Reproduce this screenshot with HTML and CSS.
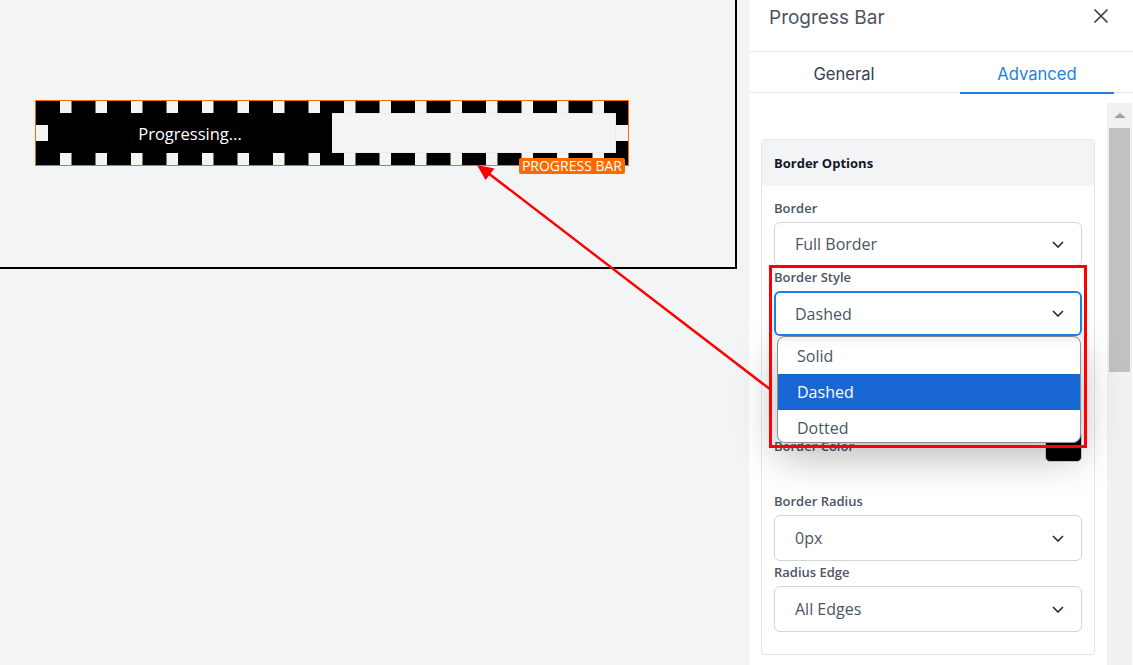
FILE: index.html
```html
<!DOCTYPE html>
<html>
<head>
<meta charset="utf-8">
<link rel="stylesheet" href="styles.css">
</head>
<body>
<div class="app">
  <div class="canvas">
    <div class="frame">
      <div class="pb">
        <div class="pb-track">
          <div class="pb-fill" style="width:284px">Progressing...</div>
        </div>
        <span class="pb-badge">PROGRESS BAR</span>
      </div>
    </div>
  </div>
  <aside class="panel">
    <div class="panel-head">
      <span class="panel-title">Progress Bar</span>
      <svg class="close" width="16" height="16" viewBox="0 0 16 16"><path d="M1.5 1.5L14.5 14.5M14.5 1.5L1.5 14.5" stroke="#374151" stroke-width="1.7" fill="none"/></svg>
    </div>
    <div class="tabs">
      <div class="tab">General</div>
      <div class="tab active">Advanced</div>
    </div>
    <div class="panel-body">
      <div class="scroll">
        <div class="card">
          <div class="card-head">Border Options</div>
          <div class="card-body">
            <div class="field">
              <div class="label">Border</div>
              <div class="select"><span>Full Border</span><svg class="chev" width="12" height="7" viewBox="0 0 12 7"><path d="M1 1l5 5 5-5" stroke="#1f2937" stroke-width="1.6" fill="none"/></svg></div>
            </div>
            <div class="field open">
              <div class="label">Border Style</div>
              <div class="select focus"><span>Dashed</span><svg class="chev" width="12" height="7" viewBox="0 0 12 7"><path d="M1 1l5 5 5-5" stroke="#1f2937" stroke-width="1.6" fill="none"/></svg></div>
              <ul class="dropdown">
                <li>Solid</li>
                <li class="sel">Dashed</li>
                <li>Dotted</li>
              </ul>
            </div>
            <div class="color-row">
              <div class="label">Border Color</div>
              <div class="swatch"></div>
            </div>
            <div class="field">
              <div class="label">Border Radius</div>
              <div class="select tall"><span>0px</span><svg class="chev" width="12" height="7" viewBox="0 0 12 7"><path d="M1 1l5 5 5-5" stroke="#1f2937" stroke-width="1.6" fill="none"/></svg></div>
            </div>
            <div class="field">
              <div class="label">Radius Edge</div>
              <div class="select tall"><span>All Edges</span><svg class="chev" width="12" height="7" viewBox="0 0 12 7"><path d="M1 1l5 5 5-5" stroke="#1f2937" stroke-width="1.6" fill="none"/></svg></div>
            </div>
          </div>
        </div>
      </div>
      <div class="scrollbar">
        <div class="sb-arrow"></div>
        <div class="sb-thumb"></div>
      </div>
    </div>
  </aside>
  <svg class="annot" width="1133" height="665" viewBox="0 0 1133 665">
    <rect x="770.5" y="266.5" width="315" height="180" fill="none" stroke="#ff0000" stroke-width="3"/>
    <line x1="771" y1="390" x2="488" y2="173" stroke="#ff0000" stroke-width="2.4"/>
    <path d="M477 165 L494.5 168.5 L485.5 180 Z" fill="#ff0000"/>
  </svg>
</div>
</body>
</html>
```

FILE: styles.css
```css
* { box-sizing: border-box; }
html, body { margin: 0; padding: 0; }
body {
  width: 1133px;
  height: 665px;
  overflow: hidden;
  background: #f3f4f6;
  font-family: "Open Sans", "Noto Sans", sans-serif;
}
.app {
  position: relative;
  display: flex;
  width: 1133px;
  height: 665px;
}
.canvas {
  width: 749px;
  flex: none;
  background: #f3f4f6;
}
.frame {
  width: 737px;
  height: 269px;
  border-right: 2px solid #000;
  border-bottom: 2px solid #000;
  padding: 101px 0 0 36px;
}
.pb {
  position: relative;
  width: 592px;
  height: 64px;
  border: 12px dashed #000;
  background: #f4f4f5;
  outline: 1px solid #ff6a00;
}
.pb-track {
  height: 40px;
  background: #f4f4f5;
  box-shadow: inset 0 0 2px rgba(0, 0, 0, 0.12);
}
.pb-fill {
  height: 40px;
  background: #000;
  color: #fff;
  font-size: 16.5px;
  display: flex;
  align-items: center;
  justify-content: center;
}
.pb-badge {
  position: absolute;
  right: -9px;
  bottom: -21px;
  height: 16px;
  padding: 0 3px;
  background: #ff6a00;
  color: #fff;
  font-size: 14px;
  line-height: 16px;
  border-radius: 2px;
}
.panel {
  width: 384px;
  flex: none;
  background: #fff;
  display: flex;
  flex-direction: column;
}
.panel-head {
  height: 52px;
  border-bottom: 1px solid #e5e7eb;
  display: flex;
  justify-content: space-between;
  align-items: flex-start;
  padding: 5px 24px 0 20px;
}
.panel-title {
  font-family: Inter, "Noto Sans", sans-serif;
  font-size: 19px;
  color: #4b5563;
  line-height: 25px;
}
.close { margin-top: 3px; }
.tabs {
  height: 41px;
  border-bottom: 1px solid #e5e7eb;
  display: flex;
  padding-left: 18px;
  gap: 39px;
}
.tab {
  width: 154px;
  text-align: center;
  font-family: Inter, "Noto Sans", sans-serif;
  font-size: 16.6px;
  color: #374151;
  line-height: 20px;
  padding-top: 12px;
}
.tab.active {
  color: #1a82e2;
  border-bottom: 2px solid #1a82e2;
  margin-bottom: -2px;
}
.panel-body {
  flex: 1;
  display: flex;
  padding-top: 10px;
}
.scroll {
  flex: 1;
  padding: 36px 0 0 12px;
}
.card {
  width: 334px;
  border: 1px solid #e5e7eb;
  border-radius: 4px;
  background: #fff;
}
.card-head {
  height: 46px;
  background: #f3f4f6;
  padding-left: 12px;
  display: flex;
  align-items: center;
  font-size: 13px;
  font-weight: 700;
  color: #111827;
}
.card-body {
  padding: 13px 12px 20px;
}
.field {
  position: relative;
  margin-bottom: 2px;
}
.label {
  font-size: 13px;
  font-weight: 600;
  color: #4b5563;
  line-height: 18px;
  margin-bottom: 5px;
}
.select {
  height: 44px;
  border: 1px solid #d1d5db;
  border-radius: 6px;
  display: flex;
  align-items: center;
  justify-content: space-between;
  padding: 0 17px 0 20px;
  font-size: 16px;
  color: #4b5563;
  background: #fff;
}
.select.tall {
  height: 46px;
}
.select.focus {
  position: relative;
  z-index: 6;
  border: 2px solid #1a82e2;
  padding-left: 19px;
  padding-right: 16px;
  height: 45px;
  box-shadow: 0 4px 10px rgba(0, 0, 0, 0.08);
}
.dropdown {
  position: absolute;
  left: 3px;
  top: 68px;
  width: 304px;
  height: 107px;
  margin: 0;
  padding: 1px 0 0;
  list-style: none;
  background: #fff;
  border: 1px solid #8b8f96;
  border-radius: 8px;
  overflow: hidden;
  box-shadow: 0 14px 40px rgba(0, 0, 0, 0.28);
  z-index: 5;
}
.dropdown li {
  height: 36px;
  line-height: 36px;
  padding-left: 19px;
  font-size: 16px;
  color: #4b5563;
}
.dropdown li.sel {
  background: #1967d2;
  color: #fff;
}
.color-row {
  display: flex;
  justify-content: space-between;
  align-items: center;
  height: 30px;
  margin-top: 95px;
  margin-bottom: 31px;
}
.color-row .label { margin: 0; }
.swatch {
  width: 37px;
  height: 31px;
  background: #000;
  border: 1px solid #d1d5db;
  border-radius: 5px;
}
.scrollbar {
  width: 25px;
  margin-right: 1px;
  background: #f1f1f1;
  display: flex;
  flex-direction: column;
  align-items: center;
}
.sb-arrow {
  margin-top: 10px;
  width: 0;
  height: 0;
  border-left: 6px solid transparent;
  border-right: 6px solid transparent;
  border-bottom: 5px solid #a3a3a3;
}
.sb-thumb {
  margin-top: 10px;
  width: 21px;
  height: 244px;
  background: #c1c1c1;
}
.annot {
  position: absolute;
  left: 0;
  top: 0;
  pointer-events: none;
  z-index: 10;
}
```
